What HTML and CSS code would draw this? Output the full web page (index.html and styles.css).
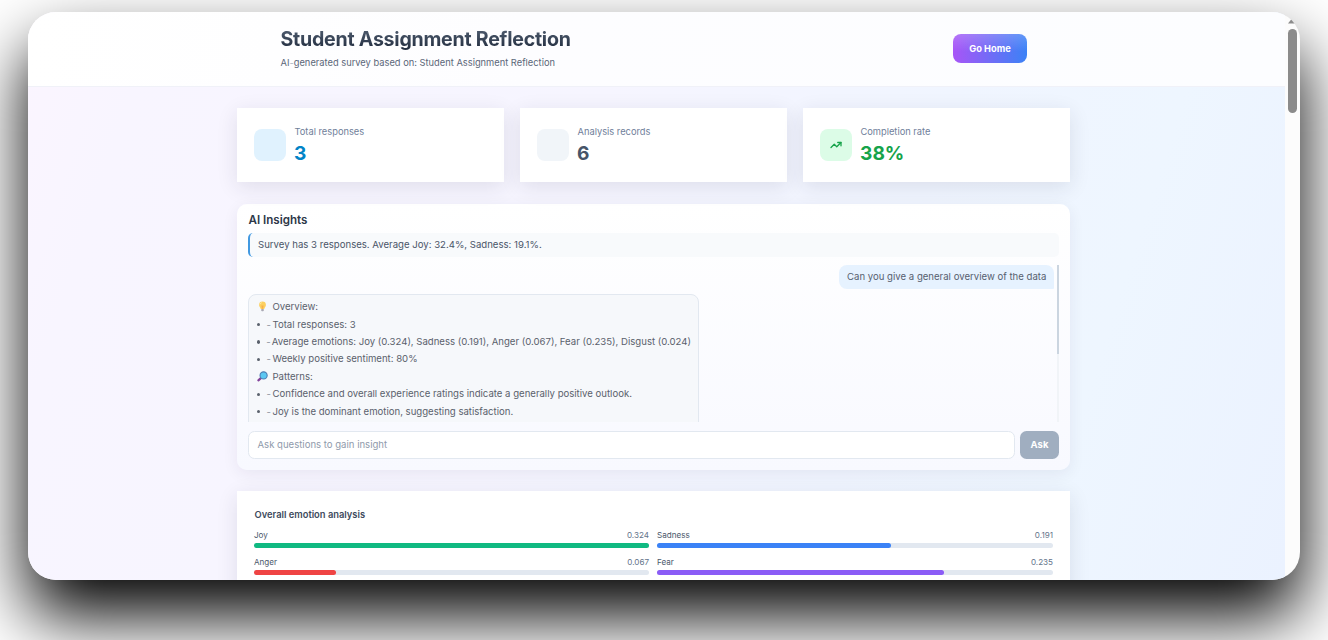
FILE: index.html
```html
<!DOCTYPE html>
<html lang="en">
<head>
<meta charset="utf-8">
<title>Student Assignment Reflection</title>
<link rel="stylesheet" href="styles.css">
</head>
<body>
<div class="window">
  <div class="page">
    <header class="topbar">
      <div class="topbar-inner">
        <div>
          <h1 class="title">Student Assignment Reflection</h1>
          <p class="subtitle">AI<span class="hyphen">-</span>generated survey based on: Student Assignment Reflection</p>
        </div>
        <button class="home-btn">Go Home</button>
      </div>
    </header>
    <main class="content">
      <section class="stats">
        <div class="stat">
          <div class="stat-icon sky"></div>
          <div><div class="stat-label">Total responses</div><div class="stat-value sky-text">3</div></div>
        </div>
        <div class="stat">
          <div class="stat-icon slate"></div>
          <div><div class="stat-label">Analysis records</div><div class="stat-value slate-text">6</div></div>
        </div>
        <div class="stat">
          <div class="stat-icon green">
            <svg width="12" height="12" viewBox="0 0 24 24" fill="none" stroke="#16a34a" stroke-width="2.6" stroke-linecap="round" stroke-linejoin="round"><path d="M2 17l6.500-6.500 5 5L22 7"/><path d="M15.500 7H22v6.500"/></svg>
          </div>
          <div><div class="stat-label">Completion rate</div><div class="stat-value green-text">38%</div></div>
        </div>
      </section>

      <section class="insights">
        <h2 class="insights-title">AI Insights</h2>
        <div class="summary">Survey has 3 responses. Average Joy: 32.4%, Sadness: 19.1%.</div>
        <div class="chat">
          <div class="messages">
            <div class="msg-user">Can you give a general overview of the data</div>
            <div class="msg-ai">
              <div class="line"><svg class="emoji" viewBox="0 0 20 20"><path d="M10 1a6.200 6.200 0 0 0-6.200 6.200c0 3.300 2.600 4.300 3 7.300h6.400c.4-3 3-4 3-7.300A6.200 6.200 0 0 0 10 1z" fill="#fcd05f"/><path d="M8 8l1 6h2l1-6z" fill="#f8ae48"/><path d="M5.500 6a4 4 0 0 1 3-3" stroke="#fff0b5" stroke-width="1.500" fill="none"/><rect x="7.500" y="14.500" width="5" height="4" rx="1.500" fill="#a9a9b4"/></svg><span>Overview:</span></div>
              <div class="line item"><i class="dash">-</i><span>Total responses: 3</span></div>
              <div class="line item"><i class="dash">-</i><span>Average emotions: Joy (0.324), Sadness (0.191), Anger (0.067), Fear (0.235), Disgust (0.024)</span></div>
              <div class="line item"><i class="dash">-</i><span>Weekly positive sentiment: 80%</span></div>
              <div class="line"><svg class="emoji" viewBox="0 0 20 20"><path d="M2.500 17l5-4.500" stroke="#83439a" stroke-width="4" stroke-linecap="round"/><circle cx="12" cy="8" r="6.500" fill="#5cc8f2" stroke="#4f7fb4" stroke-width="2"/></svg><span>Patterns:</span></div>
              <div class="line item"><i class="dash">-</i><span>Confidence and overall experience ratings indicate a generally positive outlook.</span></div>
              <div class="line item"><i class="dash">-</i><span>Joy is the dominant emotion, suggesting satisfaction.</span></div>
            </div>
          </div>
          <div class="chat-track"><div class="chat-thumb"></div></div>
        </div>
        <div class="ask-row">
          <div class="ask-input">Ask questions to gain insight</div>
          <button class="ask-btn">Ask</button>
        </div>
      </section>

      <section class="emotions">
        <h3 class="emotions-title">Overall emotion analysis</h3>
        <div class="bars">
          <div><div class="bar-head"><span>Joy</span><span class="num">0.324</span></div><div class="bar"><div class="fill joy" style="width:100%"></div></div></div>
          <div><div class="bar-head"><span>Sadness</span><span class="num">0.191</span></div><div class="bar"><div class="fill sadness" style="width:59%"></div></div></div>
          <div><div class="bar-head"><span>Anger</span><span class="num">0.067</span></div><div class="bar"><div class="fill anger" style="width:20.7%"></div></div></div>
          <div><div class="bar-head"><span>Fear</span><span class="num">0.235</span></div><div class="bar"><div class="fill fear" style="width:72.500%"></div></div></div>
        </div>
      </section>
    </main>
  </div>
  <div class="scrollbar">
    <svg class="scroll-arrow" width="7" height="5" viewBox="0 0 7 5"><path d="M3.500 0L7 4.500H0z" fill="#8b8b8b"/></svg>
    <div class="scroll-thumb"></div>
  </div>
</div>
</body>
</html>
```
FILE: styles.css
```css
* { box-sizing: border-box; }
body {
  margin: 0;
  height: 640px;
  overflow: hidden;
  background: #fff;
  padding: 12px 28px 60px;
  font-family: Inter, sans-serif;
  color: #334155;
}
h1, h2, h3, p { margin: 0; }
button { border: 0; padding: 0; font-family: inherit; color: #fff; }

.window {
  display: flex;
  height: 568px;
  border-radius: 28px;
  overflow: hidden;
  background: #fcfcfc;
  box-shadow: 0 36px 68px #000;
}
.page {
  flex: 1;
  min-width: 0;
  overflow: hidden;
  background: linear-gradient(108deg, #fbf5ff 0%, #f8f5ff 9%, #f6f5ff 42%, #f0f5ff 66%, #eef6ff 82%, #ebf2ff 100%);
}
.topbar {
  height: 75px;
  background: linear-gradient(90deg, #fff, #fdfdff 40%, #fcfdff);
  border-bottom: 1px solid #f0f1f8;
}
.topbar-inner {
  display: flex;
  justify-content: space-between;
  width: 746.500px;
  margin-left: 252.500px;
  padding-top: 15px;
}
.title {
  font-size: 19.600px;
  line-height: 24px;
  font-weight: 650;
  letter-spacing: -0.250px;
  background: linear-gradient(#4b586b 15%, #1e293b);
  background-clip: text;
  -webkit-background-clip: text;
  color: transparent;
}
.subtitle { margin-top: 5px; font-size: 9.320px; line-height: 14px; color: #5b6779; white-space: nowrap; }
.hyphen { color: #aab4c2; }
.home-btn {
  margin-top: 7px;
  width: 74px;
  height: 29px;
  border-radius: 8px;
  font-size: 9.300px;
  font-weight: 700;
  background: linear-gradient(rgba(255,255,255,.18), rgba(255,255,255,0) 60%), linear-gradient(90deg, #a855f7, #3b82f6);
}

.content { width: 833px; margin: 21px 0 0 209px; }
.stats { display: grid; grid-template-columns: repeat(3, 267px); gap: 16px; }
.stat {
  display: flex;
  align-items: center;
  gap: 8px;
  height: 74px;
  padding: 0 17px;
  background: #fff;
  box-shadow: 0 5px 20px rgba(40,35,65,.11);
}
.stat-icon { display: flex; align-items: center; justify-content: center; width: 32px; height: 32px; border-radius: 8px; }
.sky { background: #e0f2fe; }
.slate { background: #f1f5f9; }
.green { background: #dcfce7; }
.stat-label { font-size: 9.300px; line-height: 14px; padding-left: 0.500px; color: #70809a; }
.stat-value { font-size: 19.200px; line-height: 26px; margin-top: 1px; font-weight: 700; }
.sky-text { color: #0284c7; }
.slate-text { color: #475569; }
.green-text { color: #16a34a; }

.insights {
  margin-top: 21.500px;
  height: 266.500px;
  padding: 8px 11px 0;
  border-radius: 10px;
  background: linear-gradient(#fff, #f8f9ff);
  box-shadow: 0 4px 16px rgba(40,35,65,.07);
}
.insights-title { font-size: 11.600px; line-height: 17px; padding-left: 0.500px; font-weight: 600; color: #2d3748; }
.summary {
  margin-top: 4px;
  height: 24px;
  line-height: 24px;
  padding-left: 8px;
  border-left: 2px solid #4299e1;
  border-radius: 5px;
  background: #f8fafc;
  font-size: 9.600px;
  color: #4a5568;
}
.chat { display: flex; justify-content: space-between; margin-top: 8px; height: 157.500px; overflow: hidden; }
.messages { width: 806px; }
.msg-user {
  width: 215px;
  height: 24px;
  margin-left: auto;
  padding-left: 8px;
  line-height: 24px;
  border-radius: 8px 8px 1px 8px;
  background: #e6f2ff;
  font-size: 9.600px;
  color: #56606f;
  white-space: nowrap;
}
.msg-ai {
  width: 451px;
  height: 180px;
  margin-top: 5px;
  padding: 3.500px 7px;
  border: 1px solid #e2e8f0;
  border-radius: 8px;
  background: #f6f8fb;
  font-size: 9.580px;
  color: #5a616c;
  white-space: nowrap;
}
.line { display: flex; align-items: center; height: 17.420px; }
.emoji { width: 11px; height: 11px; margin: 0 5px 0 0.500px; }
.item::before { content: ""; width: 3.400px; height: 3.400px; margin: 1px 6.600px 0 0.500px; border-radius: 50%; background: #5a616c; }
.dash { width: 6px; font-style: normal; color: #8e95a0; }
.chat-track { width: 2px; background: #f1f4f8; }
.chat-thumb { height: 89px; background: #cbd5e0; }
.ask-row { display: flex; gap: 5px; margin-top: 8.500px; }
.ask-input {
  flex: 1;
  height: 28px;
  line-height: 26px;
  padding-left: 8.500px;
  border: 1px solid #e2e8f0;
  border-radius: 6.500px;
  background: #fff;
  font-size: 9.570px;
  color: #8f9aab;
}
.ask-btn { width: 39px; height: 28px; border-radius: 6.500px; background: #a0aec0; font-size: 9.500px; font-weight: 700; }

.emotions {
  margin-top: 21px;
  height: 160px;
  padding: 17px 17px 0;
  background: #fff;
  box-shadow: 0 5px 20px rgba(40,35,65,.11);
}
.emotions-title { font-size: 9.350px; line-height: 14px; padding-left: 0.500px; font-weight: 600; color: #3e4a5c; }
.bars { display: grid; grid-template-columns: 395px 396px; column-gap: 8px; row-gap: 7.500px; margin-top: 6.500px; }
.bar-head { display: flex; justify-content: space-between; font-size: 8.100px; line-height: 12px; color: #4b586b; }
.num { color: #64748b; }
.bar { height: 5px; margin-top: 2.500px; border-radius: 3px; background: #e2e8f0; }
.fill { height: 100%; border-radius: 3px; }
.joy { background: #10b981; }
.sadness { background: #3b82f6; }
.anger { background: #ef4444; }
.fear { background: #8b5cf6; }

.scrollbar { width: 15px; padding: 7px 0 0 3px; }
.scroll-arrow { display: block; margin-left: 0; }
.scroll-thumb { width: 9px; height: 84px; margin-top: 5px; border-radius: 5px; background: #8b8b8b; }
```
